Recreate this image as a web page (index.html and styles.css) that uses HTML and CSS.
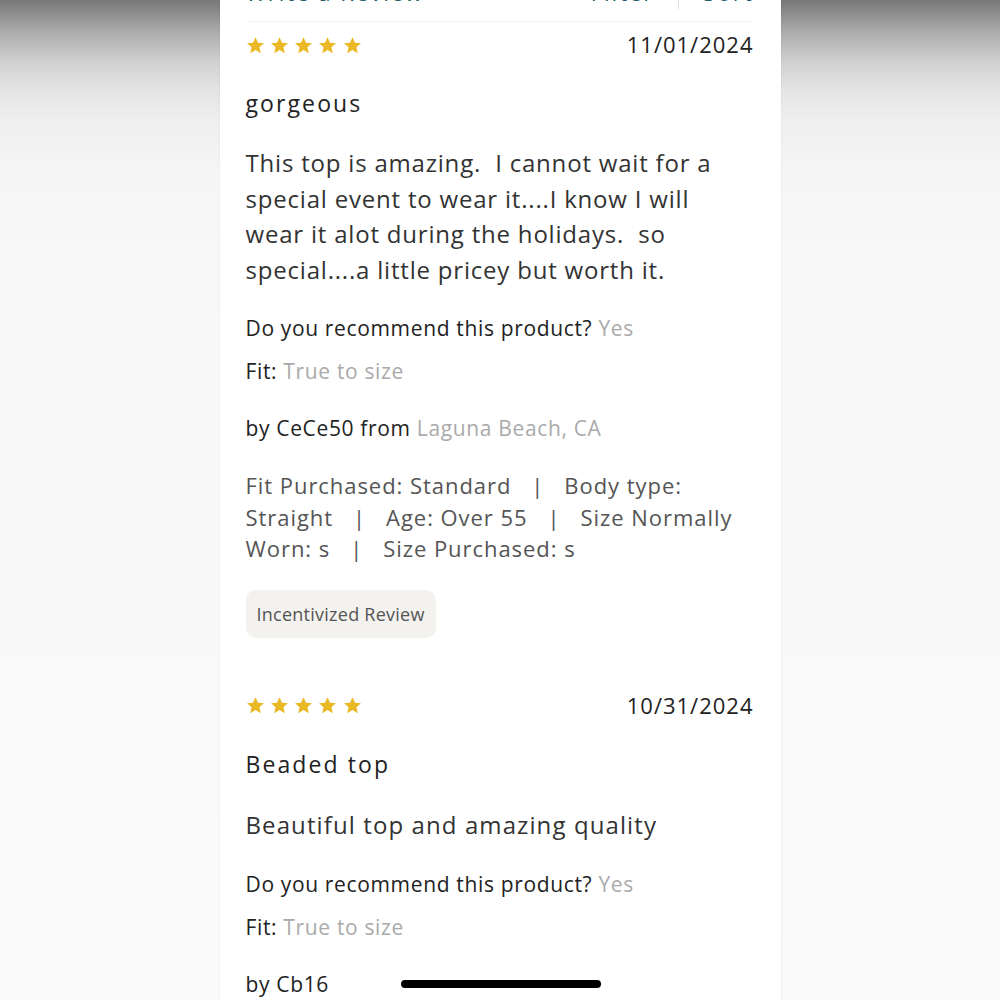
FILE: index.html
```html
<!DOCTYPE html>
<html lang="en">
<head>
<meta charset="utf-8">
<title>Reviews</title>
<link rel="stylesheet" href="styles.css">
</head>
<body>
<div class="side"></div>
<main class="panel">
  <header class="toolbar">
    <span class="tb-link">Write a Review</span>
    <div class="tb-right">
      <span class="tb-link">Filter</span>
      <span class="tb-sep"></span>
      <span class="tb-link">Sort</span>
    </div>
  </header>

  <article class="review">
    <div class="review-top">
      <div class="stars">
        <svg class="star" viewBox="0 0 24 24"><path d="M12 1.5l3.1 7.1 7.6.6-5.8 5 1.8 7.5L12 17.8l-6.7 3.9 1.8-7.5-5.8-5 7.6-.6z"/></svg>
        <svg class="star" viewBox="0 0 24 24"><path d="M12 1.5l3.1 7.1 7.6.6-5.8 5 1.8 7.5L12 17.8l-6.7 3.9 1.8-7.5-5.8-5 7.6-.6z"/></svg>
        <svg class="star" viewBox="0 0 24 24"><path d="M12 1.5l3.1 7.1 7.6.6-5.8 5 1.8 7.5L12 17.8l-6.7 3.9 1.8-7.5-5.8-5 7.6-.6z"/></svg>
        <svg class="star" viewBox="0 0 24 24"><path d="M12 1.5l3.1 7.1 7.6.6-5.8 5 1.8 7.5L12 17.8l-6.7 3.9 1.8-7.5-5.8-5 7.6-.6z"/></svg>
        <svg class="star" viewBox="0 0 24 24"><path d="M12 1.5l3.1 7.1 7.6.6-5.8 5 1.8 7.5L12 17.8l-6.7 3.9 1.8-7.5-5.8-5 7.6-.6z"/></svg>
      </div>
      <div class="date">11/01/2024</div>
    </div>
    <h2 class="title">gorgeous</h2>
    <p class="body">This top is amazing.  I cannot wait for a special event to wear it....I know I will wear it alot during the holidays.  so special....a little pricey but worth it.</p>
    <p class="meta">Do you recommend this product? <span class="muted">Yes</span></p>
    <p class="meta">Fit: <span class="muted">True to size</span></p>
    <p class="meta author">by CeCe50 from <span class="muted">Laguna Beach, CA</span></p>
    <p class="details">Fit Purchased: Standard   |   Body type: Straight   |   Age: Over 55   |   Size Normally Worn: s   |   Size Purchased: s</p>
    <div class="badge">Incentivized Review</div>
  </article>

  <article class="review second">
    <div class="review-top">
      <div class="stars">
        <svg class="star" viewBox="0 0 24 24"><path d="M12 1.5l3.1 7.1 7.6.6-5.8 5 1.8 7.5L12 17.8l-6.7 3.9 1.8-7.5-5.8-5 7.6-.6z"/></svg>
        <svg class="star" viewBox="0 0 24 24"><path d="M12 1.5l3.1 7.1 7.6.6-5.8 5 1.8 7.5L12 17.8l-6.7 3.9 1.8-7.5-5.8-5 7.6-.6z"/></svg>
        <svg class="star" viewBox="0 0 24 24"><path d="M12 1.5l3.1 7.1 7.6.6-5.8 5 1.8 7.5L12 17.8l-6.7 3.9 1.8-7.5-5.8-5 7.6-.6z"/></svg>
        <svg class="star" viewBox="0 0 24 24"><path d="M12 1.5l3.1 7.1 7.6.6-5.8 5 1.8 7.5L12 17.8l-6.7 3.9 1.8-7.5-5.8-5 7.6-.6z"/></svg>
        <svg class="star" viewBox="0 0 24 24"><path d="M12 1.5l3.1 7.1 7.6.6-5.8 5 1.8 7.5L12 17.8l-6.7 3.9 1.8-7.5-5.8-5 7.6-.6z"/></svg>
      </div>
      <div class="date">10/31/2024</div>
    </div>
    <h2 class="title">Beaded top</h2>
    <p class="body">Beautiful top and amazing quality</p>
    <p class="meta">Do you recommend this product? <span class="muted">Yes</span></p>
    <p class="meta">Fit: <span class="muted">True to size</span></p>
    <p class="meta author">by Cb16</p>
  </article>
  <div class="home-indicator"></div>
</main>
<div class="side"></div>
</body>
</html>
```

FILE: styles.css
```css
html, body {
  margin: 0;
  padding: 0;
  height: 1000px;
  overflow: hidden;
}
body {
  display: flex;
  background: linear-gradient(to bottom, #777 0px, #a9a9a9 30px, #cfcfcf 60px, #e4e4e4 90px, #efefef 120px, #f5f5f5 170px, #f8f8f8 260px, #fafafa 1000px);
  font-family: "Open Sans", "Liberation Sans", sans-serif;
  color: #222;
}
.side {
  flex: 1;
}
.panel {
  width: 561px;
  background: #fff;
  position: relative;
  box-shadow: 0 0 2px rgba(0,0,0,0.08);
  padding: 0 27px 0 26px;
  box-sizing: border-box;
}
.toolbar {
  display: flex;
  justify-content: space-between;
  align-items: flex-end;
  margin-top: -20px;
  height: 42px;
  border-bottom: 1px solid #f3f3f3;
  box-sizing: border-box;
  padding-bottom: 16px;
}
.tb-link {
  color: #1d5e68;
  font-size: 22px;
  letter-spacing: 2px;
  line-height: 26px;
}
.tb-right {
  display: flex;
  align-items: flex-end;
  gap: 24px;
}
.tb-sep {
  width: 1px;
  height: 28px;
  background: #ddd;
  margin-bottom: -4px;
}
.review-top {
  display: flex;
  justify-content: space-between;
  align-items: center;
  height: 44px;
}
.stars {
  display: flex;
  gap: 5.3px;
  margin-top: 2px;
}
.star {
  width: 19px;
  height: 19px;
  fill: #e9b824;
  display: block;
}
.date {
  font-size: 22px;
  color: #222;
  letter-spacing: 1px;
}
.title {
  margin: 0;
  font-weight: 400;
  font-size: 23px;
  letter-spacing: 2.1px;
  line-height: 30px;
  padding-top: 22px;
  color: #222;
}
.body {
  margin: 0;
  padding-top: 27px;
  font-size: 24px;
  line-height: 35.5px;
  letter-spacing: 0.8px;
  color: #333;
  white-space: pre-wrap;
}
.meta {
  margin: 0;
  font-size: 21px;
  line-height: 28px;
  padding-top: 15px;
  color: #222;
  letter-spacing: 0.65px;
}
.body + .meta {
  padding-top: 27px;
}
.meta.author {
  padding-top: 29px;
}
.muted {
  color: #aaa;
}
.details {
  margin: 0;
  padding-top: 28px;
  font-size: 22px;
  line-height: 31.5px;
  letter-spacing: 0.95px;
  color: #555;
  white-space: pre-wrap;
}
.badge {
  display: inline-block;
  margin-top: 25px;
  background: #f3f2ef;
  border-radius: 10px;
  padding: 0 11px;
  height: 48px;
  line-height: 48px;
  font-size: 18px;
  letter-spacing: 0.25px;
  color: #555;
}
.review.second {
  padding-top: 45px;
}
.second .body {
  padding-top: 28px;
  letter-spacing: 1.1px;
}
.second .body + .meta {
  padding-top: 28px;
}
.home-indicator {
  position: absolute;
  left: 181px;
  bottom: 12px;
  width: 200px;
  height: 8px;
  border-radius: 4px;
  background: #000;
}
```
